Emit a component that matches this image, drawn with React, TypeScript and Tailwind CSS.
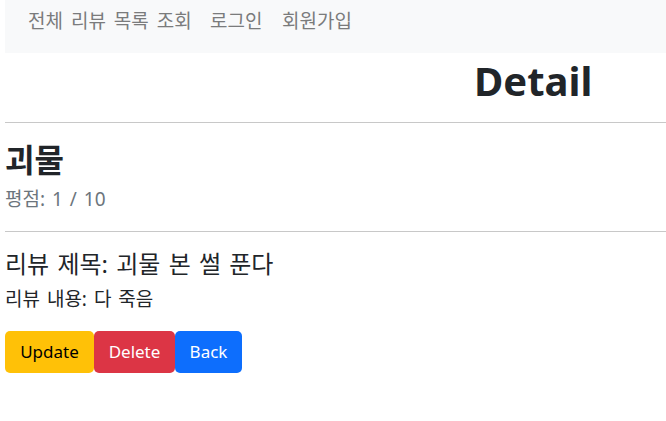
export default function App() {
  const font = { fontFamily: '"Noto Sans", "Noto Sans CJK KR", sans-serif' };
  return (
    <div className="w-[666px] h-[421px] bg-white pl-[5px] text-[#212529]" style={font}>
      <nav className="h-[53px] bg-[#f8f9fa] flex items-start pt-[7px] pl-[23px] text-[19px] leading-[28px] text-[#7a7b7c] [word-spacing:3px]">
        <span className="w-[182px] whitespace-nowrap">전체 리뷰 목록 조회</span>
        <span className="w-[72px] whitespace-nowrap">로그인</span>
        <span className="whitespace-nowrap">회원가입</span>
      </nav>
      <div className="h-[69px] pt-[8px] pl-[469px]">
        <h1 className="text-[40px] font-bold leading-none">Detail</h1>
      </div>
      <hr className="border-t border-[#c8c8c8]" />
      <h2 className="h-[32px] text-[32px] font-bold leading-[32px] mt-[21px] whitespace-nowrap">괴물</h2>
      <p className="h-[20px] text-[19px] leading-[20px] text-[#6c757d] mt-[13px] whitespace-nowrap [word-spacing:2px]">평점: 1 / 10</p>
      <hr className="border-t border-[#c8c8c8] mt-[22px]" />
      <h5 className="h-[24px] text-[24px] leading-[24px] mt-[20px] whitespace-nowrap [word-spacing:2px]">리뷰 제목: 괴물 본 썰 푼다</h5>
      <p className="h-[20px] text-[19px] leading-[20px] mt-[13px] whitespace-nowrap [word-spacing:2px]">리뷰 내용: 다 죽음</p>
      <div className="flex mt-[22px]">
        <button className="h-[42px] w-[89px] rounded-[5px] bg-[#ffc107] text-black text-[17px]">Update</button>
        <button className="h-[42px] w-[81px] rounded-[5px] bg-[#dc3545] text-white text-[17px]">Delete</button>
        <button className="h-[42px] w-[67px] rounded-[5px] bg-[#0d6efd] text-white text-[17px]">Back</button>
      </div>
    </div>
  );
}
